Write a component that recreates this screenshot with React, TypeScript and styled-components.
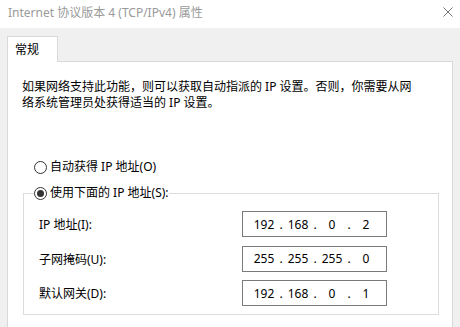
import React, {ReactElement} from 'react';
import styled, {createGlobalStyle} from 'styled-components';

const GlobalStyle = createGlobalStyle`
  html, body {
    margin: 0;
    padding: 0;
    background: #f0f0f0;
  }
  body {
    font-family: "Noto Sans", "Noto Sans CJK SC", sans-serif;
    font-size: 12px;
    color: #000;
  }
`;

const Window = styled.div`
  width: 460px;
  height: 327px;
  overflow: hidden;
  display: flex;
  flex-direction: column;
  background: #f0f0f0;
`;

const TitleBar = styled.div`
  height: 28px;
  flex-shrink: 0;
  background: #fff;
  display: flex;
  align-items: center;
  justify-content: space-between;
  padding: 0 7px 3px 8px;
  box-sizing: border-box;
  span.title {
    color: #9a9a9a;
    font-size: 12px;
    line-height: 16px;
  }
`;

const CloseIcon = styled.svg`
  width: 10px;
  height: 10px;
  margin-top: -2px;
`;

const Body = styled.div`
  padding: 8px 7px 0;
  display: flex;
  flex-direction: column;
`;

const TabStrip = styled.div`
  display: flex;
  position: relative;
  z-index: 1;
  margin-bottom: -1px;
`;

const Tab = styled.div`
  width: 51px;
  height: 26px;
  box-sizing: border-box;
  background: #fff;
  border: 1px solid #d9d9d9;
  border-bottom: none;
  padding: 5px 0 0 7px;
  line-height: 16px;
`;

const Panel = styled.div`
  height: 300px;
  background: #fff;
  border: 1px solid #d9d9d9;
  box-sizing: border-box;
  padding: 17px 13px 0 14px;
`;

const Description = styled.p`
  margin: 0;
  line-height: 16px;
`;

const RadioRow = styled.label`
  display: flex;
  align-items: center;
  gap: 3px;
  height: 20px;
  line-height: 16px;
`;

const Radio = styled.span<{$checked?: boolean}>`
  width: 13px;
  height: 13px;
  box-sizing: border-box;
  border: 1px solid #333;
  border-radius: 50%;
  display: flex;
  align-items: center;
  justify-content: center;
  flex-shrink: 0;
  &::after {
    content: '';
    display: ${p => (p.$checked ? 'block' : 'none')};
    width: 7px;
    height: 7px;
    border-radius: 50%;
    background: #333;
  }
`;

const FirstRadio = styled.div`
  margin: 46px 0 0 12px;
`;

const Group = styled.fieldset`
  margin: 6px 0 0 1px;
  padding: 0;
  border: 1px solid #dcdcdc;
  min-width: 0;
  legend {
    padding: 0;
    margin-left: 10px;
  }
`;

const Rows = styled.div`
  display: flex;
  flex-direction: column;
  gap: 8.5px;
  padding: 8px 0 8px 15px;
`;

const FieldRow = styled.div`
  display: grid;
  grid-template-columns: 203px 145px;
  align-items: center;
`;

const IpBox = styled.div`
  height: 26px;
  box-sizing: border-box;
  border: 1px solid #7a7a7a;
  display: flex;
  align-items: center;
  padding-left: 8px;
  font-size: 12px;
`;

const Segment = styled.span`
  width: 26px;
  text-align: center;
`;

const Dot = styled.span`
  width: 8px;
  text-align: center;
`;

function IpField({value}: {value: string}): ReactElement {
  const parts = value.split('.');
  return (
    <IpBox>
      {parts.map((p, i) => (
        <React.Fragment key={i}>
          {i > 0 && <Dot>.</Dot>}
          <Segment>{p}</Segment>
        </React.Fragment>
      ))}
    </IpBox>
  );
}

const fields = [
  {label: 'IP 地址(I):', value: '192.168.0.2'},
  {label: '子网掩码(U):', value: '255.255.255.0'},
  {label: '默认网关(D):', value: '192.168.0.1'},
];

export default function App(): ReactElement {
  return (
    <Window>
      <GlobalStyle />
      <TitleBar>
        <span className="title">Internet 协议版本 4 (TCP/IPv4) 属性</span>
        <CloseIcon viewBox="0 0 10 10">
          <path d="M0.5 0.5 L9.5 9.5 M9.5 0.5 L0.5 9.5" stroke="#777" strokeWidth="1" fill="none" />
        </CloseIcon>
      </TitleBar>
      <Body>
        <TabStrip>
          <Tab>常规</Tab>
        </TabStrip>
        <Panel>
          <Description>
            如果网络支持此功能，则可以获取自动指派的 IP 设置。否则，你需要从网
            <br />
            络系统管理员处获得适当的 IP 设置。
          </Description>
          <FirstRadio>
            <RadioRow>
              <Radio />
              自动获得 IP 地址(O)
            </RadioRow>
          </FirstRadio>
          <Group>
            <legend>
              <RadioRow>
                <Radio $checked />
                使用下面的 IP 地址(S):
              </RadioRow>
            </legend>
            <Rows>
              {fields.map(f => (
                <FieldRow key={f.label}>
                  <span>{f.label}</span>
                  <IpField value={f.value} />
                </FieldRow>
              ))}
            </Rows>
          </Group>
        </Panel>
      </Body>
    </Window>
  );
}
